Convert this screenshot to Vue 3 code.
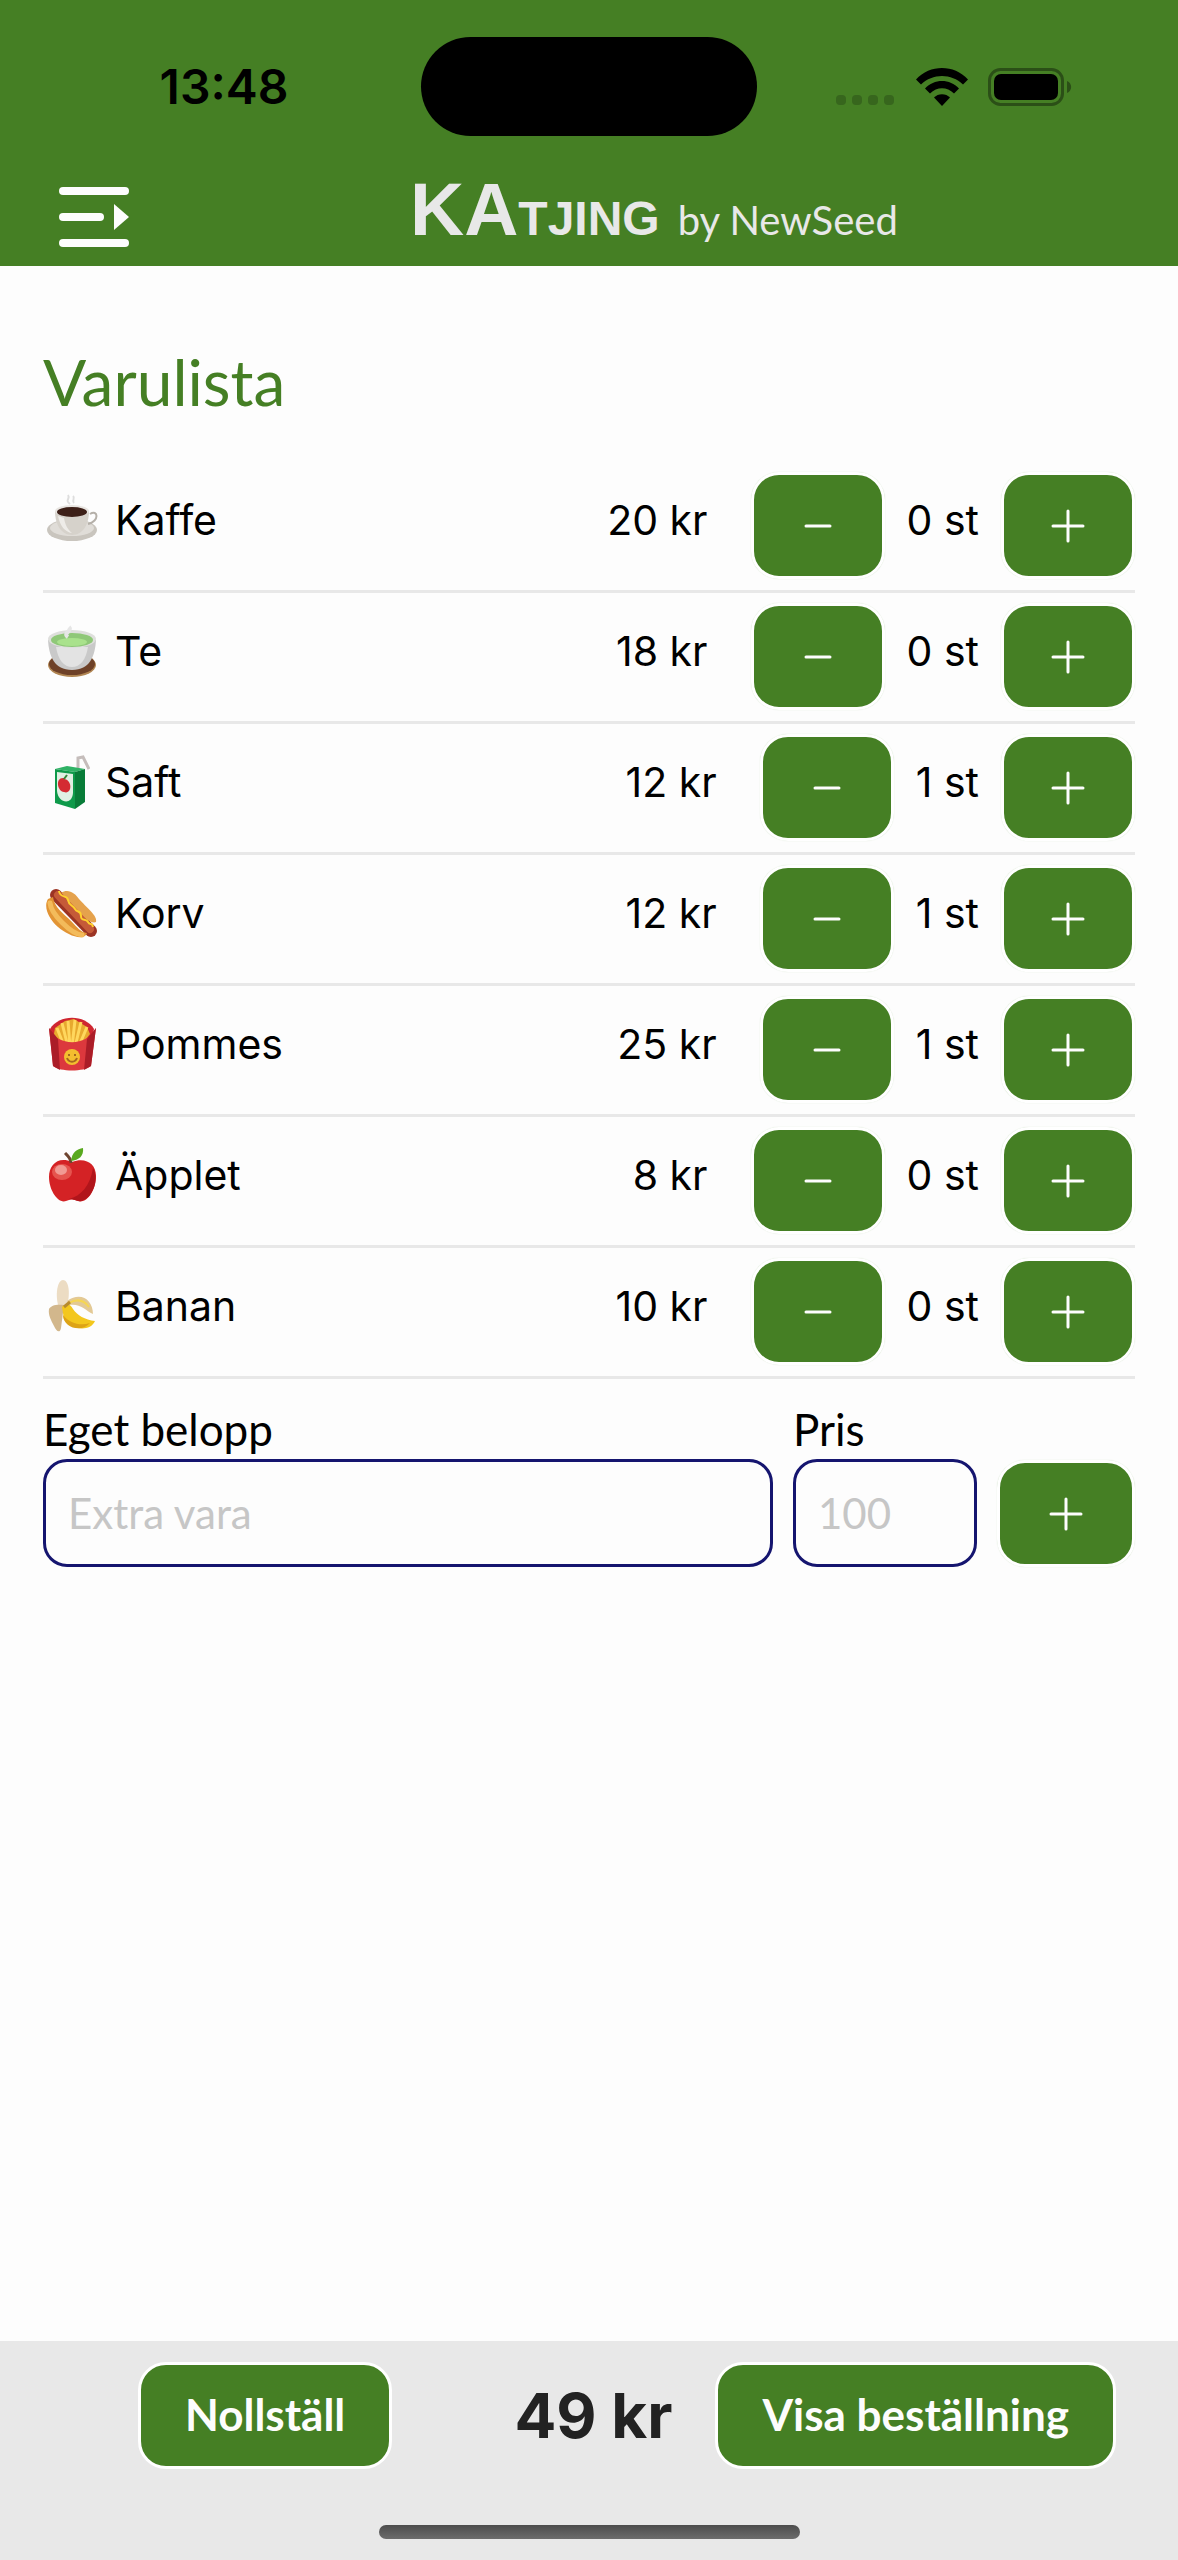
<script setup>
import { computed, ref } from 'vue'

const items = ref([
  { id: 'kaffe', name: 'Kaffe', price: 20, count: 0 },
  { id: 'te', name: 'Te', price: 18, count: 0 },
  { id: 'saft', name: 'Saft', price: 12, count: 1 },
  { id: 'korv', name: 'Korv', price: 12, count: 1 },
  { id: 'pommes', name: 'Pommes', price: 25, count: 1 },
  { id: 'apple', name: 'Äpplet', price: 8, count: 0 },
  { id: 'banan', name: 'Banan', price: 10, count: 0 },
])
const extraName = ref('')
const extraPrice = ref('')

const total = computed(() => items.value.reduce((sum, i) => sum + i.price * i.count, 0))

function addExtra() {
  const price = Number(extraPrice.value)
  if (!extraName.value || !price) return
  items.value.push({ id: 'extra', name: extraName.value, price, count: 1 })
  extraName.value = ''
  extraPrice.value = ''
}
function reset() {
  items.value.forEach((i) => (i.count = 0))
}
</script>

<template>
  <div class="app">
    <header class="header">
      <div class="status">
        <div class="time">13:48</div>
        <div class="island"></div>
        <div class="signals">
          <svg class="dots" width="60" height="12" viewBox="0 0 60 12">
            <rect v-for="n in 4" :key="n" :x="(n - 1) * 16" y="1" width="10" height="10" rx="4" fill="#37661d" />
          </svg>
          <svg width="52" height="38" viewBox="0 0 52 38">
            <path d="M0 11.5C14-3.8 38-3.8 52 11.5L47 16.5C35.500 5 16.500 5 5 16.500Z" />
            <path d="M9 20.500C18 10.500 34 10.500 43 20.500L38 25.500C31 18.500 21 18.500 14 25.500Z" />
            <path d="M18 29.500C22 25 30 25 34 29.500L26 38Z" />
          </svg>
          <svg width="84" height="38" viewBox="0 0 84 38">
            <rect x="1.500" y="1.500" width="73" height="35" rx="11" fill="none" stroke="#2b4f17" stroke-width="3" />
            <rect x="6" y="6" width="64" height="26" rx="7" />
            <path d="M79 13C84.500 15 84.500 23 79 25Z" fill="#2b4f17" />
          </svg>
        </div>
      </div>
      <div class="bar">
        <button class="menu" type="button" aria-label="Meny">
          <svg width="72" height="62" viewBox="0 0 72 62" fill="#fdfdfd">
            <rect x="1" y="1" width="70" height="8" rx="4" />
            <rect x="1" y="27" width="45" height="8" rx="4" />
            <rect x="1" y="53" width="70" height="8" rx="4" />
            <path d="M56 18L71 31L56 44Z" />
          </svg>
        </button>
        <h1 class="brand"><span class="ka">KA</span><span class="tjing">TJING</span><span class="by">by NewSeed</span></h1>
      </div>
    </header>

    <main class="main">
      <h2 class="title">Varulista</h2>
      <ul class="list">
        <li v-for="item in items" :key="item.name" class="row">
          <div class="name">
            <svg v-if="item.id === 'kaffe'" width="56" height="56" viewBox="0 0 56 56">
              <ellipse cx="28" cy="38" rx="25" ry="11" fill="#c9c5be" />
              <ellipse cx="28" cy="36" rx="22" ry="8" fill="#e0ddd8" />
              <path d="M46 22c8-5 10 7-2 10" fill="none" stroke="#b5b0a9" stroke-width="2" />
              <path d="M11 19c0 13 6 24 17 24s17-11 17-24z" fill="#d6d2cb" />
              <path d="M14 24c2 10 7 16 14 17-5-4-7-9-8-15z" fill="#eeece8" />
              <ellipse cx="28" cy="19" rx="17" ry="6" fill="#e8e5e1" />
              <ellipse cx="28" cy="20" rx="15" ry="5" fill="#3d2018" />
              <path d="M26 12c-6-4 1-5-2-9M30 11c-3-3 2-4-1-7" fill="none" stroke="#dedede" stroke-width="2" />
            </svg>
            <svg v-else-if="item.id === 'te'" width="56" height="56" viewBox="0 0 56 56">
              <ellipse cx="28" cy="42" rx="24" ry="12" fill="#b08552" />
              <ellipse cx="28" cy="41" rx="23" ry="11" fill="#6e4128" />
              <path d="M4 17c1 16 6 30 24 30s23-14 24-30z" fill="#c9c9c9" />
              <path d="M12 24c2 13 8 20 16 20s14-7 16-20z" fill="#e3e3e3" />
              <ellipse cx="28" cy="16" rx="24" ry="9" fill="#dedfdc" />
              <ellipse cx="28" cy="17" rx="21" ry="7" fill="#8fc878" />
              <ellipse cx="28" cy="19" rx="15" ry="4" fill="#a9e28c" />
              <path d="M24 14c-6-4 5-6 1-10" fill="none" stroke="#e6e6e6" stroke-width="4" />
            </svg>
            <svg v-else-if="item.id === 'saft'" width="46" height="56" viewBox="0 0 46 56">
              <path d="M34 16V4l5-1 6 12" fill="none" stroke="#c5bdbb" stroke-width="3" />
              <path d="M11 15l12-3 18 3-10 3z" fill="#2fb265" />
              <path d="M11 15l20 3v37l-20-6z" fill="#0e9a4a" />
              <path d="M31 18l10-3v33l-10 7z" fill="#087c38" />
              <path d="M13 18l16 2v19c-1 13-15 10-16-2z" fill="#e0f0e3" />
              <path d="M20 24c-9-1-7 13 0 14 8 3 9-12 0-13z" fill="#d42b32" />
              <path d="M20 25l3-4" stroke="#348538" stroke-width="2" />
            </svg>
            <svg v-else-if="item.id === 'korv'" width="56" height="56" viewBox="0 0 56 56">
              <path d="M12 10L47 46" stroke="#9c3424" stroke-width="12" stroke-linecap="round" />
              <path d="M17 8c7-5 14 0 18 6 7 8 19 17 17 23-7 4-31-20-35-29z" fill="#e5a24c" />
              <path d="M14 10l32 34" stroke="#c55a38" stroke-width="8" stroke-linecap="round" />
              <path d="M4 14c-5 8 1 20 10 28s26 15 29 6c-7-1-9-5-16-12S10 22 9 12z" fill="#e29434" />
              <path d="M6 18c1 11 21 31 32 32" fill="none" stroke="#f3bb5b" stroke-width="5" stroke-linecap="round" />
              <path d="M15 6c1 8 8 3 9 9s5 5 7 9 6 1 6 7 5 2 7 6 4 0 5 5" fill="none" stroke="#ffd22d" stroke-width="2" />
            </svg>
            <svg v-else-if="item.id === 'pommes'" width="56" height="56" viewBox="0 0 56 56">
              <path d="M6 13C15-2 41-2 50 13l-4 20H10z" fill="#cf2630" />
              <path d="M11 12l10-7 9-2 13 8 3 7-10 13H20L10 18z" fill="#e7a92e" />
              <path d="M13 12l7 18M18 7l6 24M24 5l2 26M31 4l-3 27M37 6l-6 25M43 11l-8 19" stroke="#ffd75d" stroke-width="3" />
              <path d="M5 12c9 19 37 19 47 0l-5 38c-7 6-31 6-38 0z" fill="#dc383d" />
              <path d="M5 12l9 11 2 31-7-4zM52 12l-9 11-3 31 7-4z" fill="#ab1d28" />
              <circle cx="28" cy="41" r="8" fill="#f3be2f" />
              <path d="M24 39h2m4 0h2M23 42c2 5 8 5 10 0" fill="none" stroke="#a5671e" stroke-width="2" />
            </svg>
            <svg v-else-if="item.id === 'apple'" width="56" height="56" viewBox="0 0 56 56">
              <path d="M28 15C14 9 5 18 5 30c0 13 9 27 17 24 4-2 8-2 12 0 9 3 18-11 18-25 0-12-10-19-24-14z" fill="#d42225" />
              <path d="M25 52c12-3 21-13 24-31 7 12-1 31-12 33-4 1-6-2-12-2z" fill="#b1151b" />
              <ellipse cx="18" cy="25" rx="10" ry="8" fill="#e5544e" />
              <ellipse cx="17" cy="23" rx="6" ry="5" fill="#f19a93" />
              <path d="M27 16c0-5-4-8-6-10" fill="none" stroke="#6e4530" stroke-width="3" />
              <path d="M27 14C28 5 33 2 39 1c1 8-4 12-12 13z" fill="#59a91f" />
            </svg>
            <svg v-else-if="item.id === 'banan'" width="56" height="56" viewBox="0 0 56 56">
              <path d="M14 27C11 14 14 2 19 2s8 11 4 26z" fill="#ecdcc3" />
              <path d="M5 31c2-4 8-5 15-4l-3 23c-1 6-5 3-7-2C7 42 4 37 5 31z" fill="#d2b78c" />
              <path d="M23 23c14-10 26-1 26 13-8-4-13-11-24-9z" fill="#e3c995" />
              <path d="M25 25c9-5 15-3 20 4" fill="none" stroke="#f5d653" stroke-width="2" />
              <path d="M18 29c4-4 8-4 11 2 4 6 12 11 22 12-5 12-26 8-31-2z" fill="#f3c71d" />
              <path d="M19 37c7 9 18 11 27 8-8 10-27 5-27-8z" fill="#dda316" />
              <path d="M20 29l6-5" stroke="#b78a2d" stroke-width="3" />
            </svg>
            <span>{{ item.name }}</span>
          </div>
          <span class="price">{{ item.price }} kr</span>
          <button class="btn step" type="button" :aria-label="`Minska ${item.name}`" @click="item.count = Math.max(0, item.count - 1)">
            <svg width="34" height="34" viewBox="0 0 34 34"><path d="M5 17h24" /></svg>
          </button>
          <span class="count">{{ item.count }} st</span>
          <button class="btn step" type="button" :aria-label="`Öka ${item.name}`" @click="item.count++">
            <svg width="34" height="34" viewBox="0 0 34 34"><path d="M2 17h30M17 2v30" /></svg>
          </button>
        </li>
      </ul>

      <form class="extra" @submit.prevent="addExtra">
        <div class="field wide">
          <label for="extra-name">Eget belopp</label>
          <input id="extra-name" v-model="extraName" type="text" placeholder="Extra vara" />
        </div>
        <div class="field">
          <label for="extra-price">Pris</label>
          <input id="extra-price" v-model="extraPrice" type="text" inputmode="numeric" placeholder="100" />
        </div>
        <button class="btn add" type="submit" aria-label="Lägg till">
          <svg width="34" height="34" viewBox="0 0 34 34"><path d="M2 17h30M17 2v30" /></svg>
        </button>
      </form>
    </main>

    <footer class="footer">
      <div class="actions">
        <button class="btn action" type="button" @click="reset">Nollställ</button>
        <strong class="total">{{ total }} kr</strong>
        <button class="btn action" type="button">Visa beställning</button>
      </div>
      <div class="home"></div>
    </footer>
  </div>
</template>

<style>
body {
  margin: 0;
  background: #fdfdfd;
}
</style>

<style scoped>
.app {
  display: flex;
  flex-direction: column;
  min-height: 100vh;
  color: #000;
  font-family: Lato, sans-serif;
  font-size: 42px;
  line-height: 52px;
}
.header {
  background: #457f24;
  padding-top: 37px;
}
.status {
  display: grid;
  grid-template-columns: 1fr 336px 1fr;
  align-items: center;
}
.time {
  padding-left: 27px;
  text-align: center;
  font-family: Inter, sans-serif;
  font-size: 48px;
  font-weight: 600;
}
.island {
  height: 99px;
  border-radius: 50px;
  background: #000;
}
.signals {
  display: flex;
  align-items: flex-end;
  justify-content: flex-end;
  gap: 20px;
  padding-right: 106px;
}
.bar {
  display: flex;
  align-items: center;
  height: 130px;
  padding-left: 58px;
}
.menu {
  display: flex;
  padding: 32px 0 0;
  border: 0;
  background: none;
}
.brand {
  display: flex;
  align-items: baseline;
  margin: 26px auto 0 280px;
  color: #e8e8e8;
  font-family: "Liberation Sans", Arial, sans-serif;
  font-weight: 700;
  line-height: 64px;
  white-space: nowrap;
}
.ka {
  font-size: 75px;
}
.tjing {
  font-size: 48px;
}
.by {
  margin-left: 18px;
  font-family: Lato, sans-serif;
  font-size: 40px;
  font-weight: 400;
}
.main {
  padding: 76px 43px;
}
.title {
  margin: 0;
  color: #457f24;
  font-size: 64px;
  font-weight: 400;
  line-height: 80px;
}
.list {
  margin: 40px 0 0;
  padding: 0;
  list-style: none;
  font-family: Inter, sans-serif;
  font-size: 41px;
}
.row {
  display: flex;
  align-items: center;
  padding: 10px 0 11px;
  border-bottom: 3px solid #e8e8e8;
}
.name {
  display: flex;
  flex: 1;
  align-items: center;
  gap: 15px;
  padding: 0 0 12px 1px;
}
.price {
  margin-right: 43px;
  padding-bottom: 12px;
}
.count {
  margin: 0 22px;
  padding-bottom: 12px;
}
.btn {
  display: flex;
  align-items: center;
  justify-content: center;
  box-sizing: border-box;
  height: 107px;
  padding: 0;
  border: 3px solid #fff;
  border-radius: 28px;
  background: #457f24;
  color: #fdfdfd;
  font: inherit;
}
.btn path {
  fill: none;
  stroke: #fdfdfd;
  stroke-width: 3;
  stroke-linecap: round;
}
.row .btn,
.extra .btn {
  box-shadow: 0 0 1px #c8dbbf;
}
.step {
  width: 134px;
}
.extra {
  display: flex;
  align-items: flex-end;
  gap: 20px;
  margin-top: 24px;
}
.field {
  display: flex;
  flex-direction: column;
  width: 184px;
}
.field label {
  font-size: 44px;
}
.wide {
  flex: 1;
}
.field input {
  box-sizing: border-box;
  width: 100%;
  height: 108px;
  margin-top: 4px;
  padding: 0 22px;
  border: 3px solid #15156f;
  border-radius: 24px;
  background: transparent;
  color: #000;
  font: inherit;
}
.field input::placeholder {
  color: #c6c6c6;
  opacity: 1;
}
.add {
  width: 138px;
}
.footer {
  margin-top: auto;
  padding: 21px 62px;
  background: #e8e8e8;
}
.actions {
  display: flex;
  align-items: center;
  padding-left: 76px;
}
.btn.action {
  padding: 0 44px 4px;
  font-size: 44px;
  font-weight: 700;
}
.total {
  margin: 0 43px 0 auto;
  color: #222;
  font-family: Inter, sans-serif;
  font-size: 62px;
}
.home {
  width: 421px;
  height: 14px;
  margin: 56px auto 0;
  border-radius: 7px;
  background: linear-gradient(#4c4c4c, #6c6c6c);
}
</style>
